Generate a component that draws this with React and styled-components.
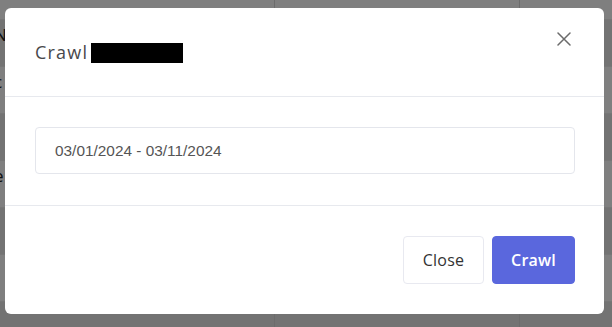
import React from "react";
import styled, { createGlobalStyle } from "styled-components";

const Global = createGlobalStyle`
  html, body { margin: 0; padding: 0; }
  body { width: 612px; height: 327px; overflow: hidden; background: #7a7a7a; font-family: "Liberation Sans", Arial, sans-serif; }
`;

const Page = styled.div`
  position: relative;
  width: 612px;
  height: 327px;
  overflow: hidden;
  background: #ffffff;
`;

const Table = styled.div`
  display: grid;
  grid-template-columns: 274px 245px 1fr;
  grid-auto-rows: 47px;
  margin-top: -27px;
`;

const Cell = styled.div`
  background: ${(p) => (p.$striped ? "#e6e6e6" : "#ffffff")};
  border-left: ${(p) => (p.$divider ? "1px solid #d8d8d8" : "none")};
  border-bottom: 1px solid #ececec;
  color: #222;
  font-family: "Open Sans", sans-serif;
  font-size: 17px;
  display: flex;
  align-items: flex-end;
  padding: 0 0 20px 22px;
  box-sizing: border-box;
  &:nth-child(3n+1) { padding-left: 0; margin-left: -6px; }
`;

const Overlay = styled.div`
  position: absolute;
  inset: 0;
  background: rgba(0, 0, 0, 0.5);
  display: flex;
  align-items: flex-start;
  justify-content: flex-start;
  padding: 8px 0 0 5px;
  box-sizing: border-box;
`;

const Modal = styled.div`
  width: 599px;
  background: #fff;
  border-radius: 6px;
  display: flex;
  flex-direction: column;
`;

const Header = styled.div`
  height: 89px;
  display: flex;
  align-items: center;
  justify-content: space-between;
  padding: 0 30px;
  border-bottom: 1px solid #e7e9ee;
  box-sizing: border-box;
  position: relative;
`;

const Title = styled.h5`
  margin: 0;
  display: flex;
  align-items: center;
  gap: 3px;
  font-family: "Open Sans", "Noto Sans", sans-serif;
  font-weight: 400;
  font-size: 18px;
  color: #48484c;
  letter-spacing: 1.2px;
`;

const Redact = styled.span`
  display: inline-block;
  width: 92px;
  height: 20px;
  background: #000;
  margin-top: 1px;
`;

const CloseX = styled.button`
  position: absolute;
  right: 32px;
  top: 23px;
  width: 16px;
  height: 16px;
  padding: 0;
  border: 0;
  background: transparent;
  display: flex;
  align-items: center;
  justify-content: center;
  cursor: pointer;
`;

const Body = styled.div`
  padding: 30px 29px 31px 30px;
  border-bottom: 1px solid #e7e9ee;
`;

const Input = styled.div`
  height: 47px;
  border: 1px solid #e4e6ec;
  border-radius: 4px;
  box-sizing: border-box;
  display: flex;
  align-items: center;
  padding: 0 19px;
  font-family: "Liberation Sans", Arial, sans-serif;
  font-size: 15.4px;
  color: #555;
`;

const Footer = styled.div`
  display: flex;
  justify-content: flex-end;
  gap: 8px;
  padding: 30px 29px 30px 30px;
`;

const Button = styled.button`
  height: 48px;
  width: ${(p) => (p.$primary ? "83px" : "81px")};
  padding: 0;
  border-radius: 4px;
  border: 1px solid ${(p) => (p.$primary ? "#5a67dd" : "#e8e9f0")};
  background: ${(p) => (p.$primary ? "#5a67dd" : "#fff")};
  color: ${(p) => (p.$primary ? "#fff" : "#333")};
  font-family: "Open Sans", "Noto Sans", sans-serif;
  font-size: 16px;
  font-weight: ${(p) => (p.$primary ? 600 : 400)};
  letter-spacing: 0.2px;
  cursor: pointer;
`;

const rows = [
  ["", "Account", "Message"],
  ["N", "", ""],
  ["c", "", ""],
  ["", "", ""],
  ["e", "", ""],
  ["", "", ""],
  ["", "", ""],
  ["", "", ""],
];

export default function App() {
  return (
    <>
      <Global />
      <Page>
        <Table>
          {rows.map((r, i) =>
            r.map((c, j) => (
              <Cell key={`${i}-${j}`} $striped={i % 2 === 1} $divider={j > 0}>
                {c}
              </Cell>
            ))
          )}
        </Table>
        <Overlay>
          <Modal>
            <Header>
              <Title>
                Crawl <Redact />
              </Title>
              <CloseX aria-label="Close">
                <svg width="14" height="14" viewBox="0 0 14 14">
                  <path d="M1 1L13 13M13 1L1 13" stroke="#6b6b6b" strokeWidth="1.5" strokeLinecap="round" />
                </svg>
              </CloseX>
            </Header>
            <Body>
              <Input>03/01/2024 - 03/11/2024</Input>
            </Body>
            <Footer>
              <Button>Close</Button>
              <Button $primary>Crawl</Button>
            </Footer>
          </Modal>
        </Overlay>
      </Page>
    </>
  );
}
